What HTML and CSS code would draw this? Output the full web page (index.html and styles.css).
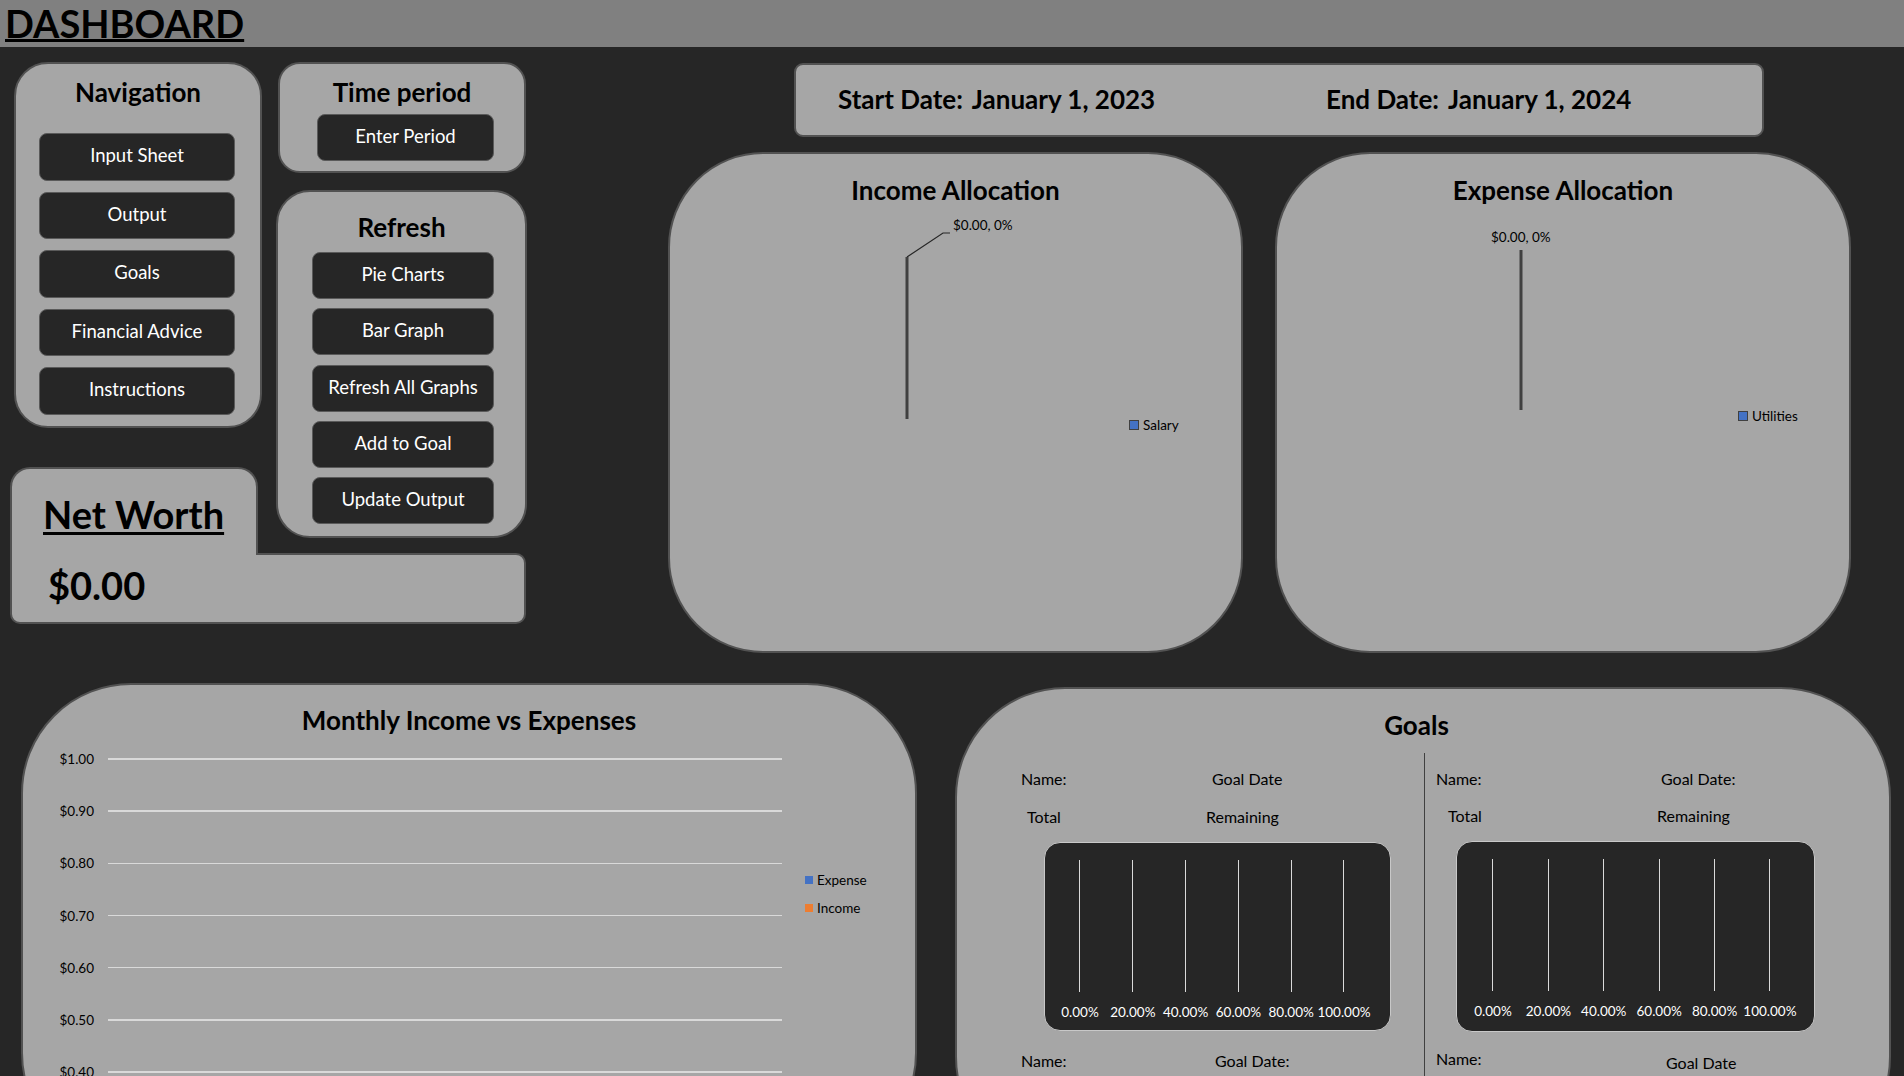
FILE: index.html
```html
<!DOCTYPE html>
<html lang="en">
<head>
<meta charset="utf-8">
<title>Dashboard</title>
<link rel="stylesheet" href="styles.css">
</head>
<body>
<header class="topbar"><h1 class="page-title">DASHBOARD</h1></header>
<main class="board">
  <section class="top-row">
    <div class="controls">
      <nav class="panel nav-panel">
        <h2 class="panel-title">Navigation</h2>
        <div class="btn-stack nav-stack">
          <div class="btn">Input Sheet</div>
          <div class="btn">Output</div>
          <div class="btn">Goals</div>
          <div class="btn">Financial Advice</div>
          <div class="btn">Instructions</div>
        </div>
      </nav>
      <section class="panel time-panel">
        <h2 class="panel-title">Time period</h2>
        <div class="btn btn-period">Enter Period</div>
      </section>
      <section class="panel refresh-panel">
        <h2 class="panel-title">Refresh</h2>
        <div class="btn-stack refresh-stack">
          <div class="btn btn-sm">Pie Charts</div>
          <div class="btn btn-sm">Bar Graph</div>
          <div class="btn btn-sm">Refresh All Graphs</div>
          <div class="btn btn-sm">Add to Goal</div>
          <div class="btn btn-sm">Update Output</div>
        </div>
      </section>
      <div class="net-tab"><h2 class="net-title">Net Worth</h2></div>
      <div class="panel net-box"><span class="net-value">$0.00</span></div>
    </div>

    <div class="charts-top">
      <div class="panel date-bar">
        <div class="date-start">Start Date:<span class="date-value">January 1, 2023</span></div>
        <div class="date-end">End Date:<span class="date-value">January 1, 2024</span></div>
      </div>
      <div class="pie-row">
        <section class="panel pie-panel">
          <h2 class="chart-title">Income Allocation</h2>
          <svg class="pie-svg" width="575" height="501" viewBox="0 0 575 501">
            <polyline points="282,81 275,81 239,105" fill="none" stroke="#262626" stroke-width="1.2"/>
            <line x1="239" y1="105" x2="239" y2="267" stroke="#404040" stroke-width="3"/>
          </svg>
          <span class="data-label income-label">$0.00, 0%</span>
          <div class="pie-legend income-legend"><span class="swatch swatch-pie"></span><span>Salary</span></div>
        </section>
        <section class="panel pie-panel pie-panel-wide">
          <h2 class="chart-title">Expense Allocation</h2>
          <svg class="pie-svg" width="576" height="501" viewBox="0 0 576 501">
            <line x1="246" y1="98" x2="246" y2="258" stroke="#404040" stroke-width="3"/>
          </svg>
          <span class="data-label expense-label">$0.00, 0%</span>
          <div class="pie-legend expense-legend"><span class="swatch swatch-pie"></span><span>Utilities</span></div>
        </section>
      </div>
    </div>
  </section>

  <section class="bottom-row">
    <section class="panel bar-panel">
      <h2 class="chart-title">Monthly Income vs Expenses</h2>
      <div class="plot">
        <div class="axis">
          <div class="grid-row"><span class="tick">$1.00</span><span class="gridline"></span></div>
          <div class="grid-row"><span class="tick">$0.90</span><span class="gridline"></span></div>
          <div class="grid-row"><span class="tick">$0.80</span><span class="gridline"></span></div>
          <div class="grid-row"><span class="tick">$0.70</span><span class="gridline"></span></div>
          <div class="grid-row"><span class="tick">$0.60</span><span class="gridline"></span></div>
          <div class="grid-row"><span class="tick">$0.50</span><span class="gridline"></span></div>
          <div class="grid-row"><span class="tick">$0.40</span><span class="gridline"></span></div>
        </div>
        <div class="legend">
          <div class="legend-item"><span class="swatch swatch-expense"></span><span>Expense</span></div>
          <div class="legend-item"><span class="swatch swatch-income"></span><span>Income</span></div>
        </div>
      </div>
    </section>

    <section class="panel goals-panel">
      <h2 class="chart-title goals-title">Goals</h2>
      <div class="goal-cols">
        <div class="goal-col goal-col-left">
          <div class="field-row l-a"><span>Name:</span><span>Goal Date</span></div>
          <div class="field-row l-b"><span>Total</span><span>Remaining</span></div>
          <div class="goal-box l-box">
            <div class="pct"><span>0.00%</span></div>
            <div class="pct"><span>20.00%</span></div>
            <div class="pct"><span>40.00%</span></div>
            <div class="pct"><span>60.00%</span></div>
            <div class="pct"><span>80.00%</span></div>
            <div class="pct"><span>100.00%</span></div>
          </div>
          <div class="field-row l-c"><span>Name:</span><span>Goal Date:</span></div>
        </div>
        <div class="goal-col goal-col-right">
          <div class="field-row r-a"><span>Name:</span><span>Goal Date:</span></div>
          <div class="field-row r-b"><span>Total</span><span>Remaining</span></div>
          <div class="goal-box r-box">
            <div class="pct"><span>0.00%</span></div>
            <div class="pct"><span>20.00%</span></div>
            <div class="pct"><span>40.00%</span></div>
            <div class="pct"><span>60.00%</span></div>
            <div class="pct"><span>80.00%</span></div>
            <div class="pct"><span>100.00%</span></div>
          </div>
          <div class="field-row r-c"><span>Name:</span><span class="lower">Goal Date</span></div>
        </div>
      </div>
    </section>
  </section>
</main>
</body>
</html>
```

FILE: styles.css
```css
* { box-sizing: border-box; }
html, body { margin: 0; padding: 0; }
body {
  width: 1904px;
  height: 1076px;
  overflow: hidden;
  background: #262626;
  font-family: Lato, "Liberation Sans", Arial, sans-serif;
  color: #000;
}

/* header */
.topbar {
  height: 47px;
  background: #808080;
  padding-left: 5px;
}
.page-title {
  margin: 0;
  font-size: 38px;
  line-height: 46px;
  font-weight: 700;
  text-decoration: underline;
  text-decoration-thickness: 3px;
  text-underline-offset: 1px;
}

.board { padding-top: 15px; }
.top-row { display: flex; align-items: flex-start; }

/* generic panel */
.panel {
  background: #a6a6a6;
  border: 2px solid #525252;
}
.panel-title {
  margin: 0;
  font-size: 26px;
  line-height: 32px;
  font-weight: 700;
  text-align: center;
}

/* left controls */
.controls {
  margin-left: 10px;
  display: grid;
  grid-template-columns: 252px 251px;
  column-gap: 14px;
  grid-template-rows: 111px 17px 238px 39px 71px 15px 71px;
}
.nav-panel {
  grid-column: 1;
  grid-row: 1 / 4;
  margin-left: 4px;
  border-radius: 34px;
  padding-top: 11.5px;
}
.time-panel {
  grid-column: 2;
  grid-row: 1;
  margin-left: 2px;
  margin-right: 1px;
  border-radius: 22px;
  padding-top: 11.5px;
}
.refresh-panel {
  grid-column: 2;
  grid-row: 3 / 6;
  border-radius: 34px;
  padding-top: 18.5px;
}

.btn-stack { display: flex; flex-direction: column; }
.nav-stack { margin: 25.5px 0 0 23px; width: 196px; gap: 11px; }
.refresh-stack { margin: 9.5px 0 0 34px; width: 182px; gap: 9.3px; }

.btn {
  height: 47.5px;
  background: #262626;
  color: #fff;
  border: 1.5px solid #5a5a5a;
  border-radius: 8px;
  font-size: 18.5px;
  line-height: 22px;
  display: flex;
  align-items: center;
  justify-content: center;
  padding-bottom: 3px;
  white-space: nowrap;
}
.btn-sm { height: 47px; }
.btn-period { margin: 6.5px 0 0 37px; width: 177px; height: 47px; }

/* net worth */
.net-tab {
  grid-column: 1;
  grid-row: 5 / 7;
  width: 248px;
  margin-bottom: -2px;
  position: relative;
  z-index: 1;
  background: #a6a6a6;
  border: 2px solid #525252;
  border-bottom: none;
  border-radius: 20px 20px 0 0;
  padding: 23px 0 0 31px;
}
.net-title {
  margin: 0;
  font-size: 38px;
  line-height: 44px;
  font-weight: 700;
  text-decoration: underline;
  text-decoration-thickness: 2.5px;
  text-underline-offset: 3px;
}
.net-box {
  grid-column: 1 / 3;
  grid-row: 7;
  width: 516px;
  border-radius: 0 10px 10px 10px;
  padding: 8px 0 0 36px;
}
.net-value {
  font-size: 38px;
  line-height: 44px;
  font-weight: 700;
}

/* top charts */
.charts-top { margin-left: 141px; width: 1183px; }
.date-bar {
  margin: 1px 0 0 126px;
  width: 970px;
  height: 74px;
  border-radius: 9px;
  padding: 17.5px 0 0 42px;
  display: flex;
  font-size: 26px;
  line-height: 32px;
  font-weight: 700;
}
.date-start { width: 488px; }
.date-value { margin-left: 9px; }

.pie-row { display: flex; gap: 32px; margin-top: 15px; }
.pie-panel {
  position: relative;
  width: 575px;
  height: 501px;
  border-radius: 95px;
  padding-top: 22px;
}
.pie-panel-wide { width: 576px; }
.chart-title {
  margin: 0;
  font-size: 26px;
  line-height: 28px;
  font-weight: 700;
  text-align: center;
}
.pie-svg { position: absolute; left: -2px; top: -2px; }
.data-label {
  position: absolute;
  font-size: 13.5px;
  line-height: 16px;
  white-space: nowrap;
}
.income-label { left: 283px; top: 63.4px; }
.expense-label { left: 214px; top: 75.4px; }
.pie-legend {
  position: absolute;
  display: flex;
  align-items: center;
  gap: 4px;
  font-size: 13.5px;
  line-height: 16px;
}
.income-legend { left: 459px; top: 263px; }
.expense-legend { left: 461px; top: 254px; }

.swatch { display: inline-block; width: 8px; height: 8px; }
.swatch-pie { width: 10px; height: 10px; background: #4472c4; border: 1.5px solid #404040; }
.swatch-expense { background: #4472c4; }
.swatch-income { background: #ed7d31; }

/* bottom row */
.bottom-row { display: flex; align-items: flex-start; margin-top: 30px; }
.bar-panel {
  margin-left: 21px;
  width: 896px;
  height: 480px;
  border-radius: 110px;
  padding-top: 21px;
}
.plot { display: flex; margin-top: -1px; }
.axis { width: 759px; }
.grid-row { display: flex; align-items: center; height: 52.17px; }
.tick {
  width: 71px;
  text-align: right;
  font-size: 13.5px;
  line-height: 16px;
}
.gridline { margin-left: 14px; width: 674px; height: 1.5px; background: #d9d9d9; }
.legend {
  margin: 139px 0 0 23px;
  display: flex;
  flex-direction: column;
  gap: 12px;
  font-size: 13.5px;
  line-height: 16px;
}
.legend-item { display: flex; align-items: center; gap: 4px; }

/* goals */
.goals-panel {
  margin-left: 38px;
  margin-top: 4px;
  width: 936px;
  height: 480px;
  border-radius: 110px;
  padding-top: 22px;
}
.goals-title { padding-right: 13px; }
.goal-cols { display: flex; margin-top: 14px; }
.goal-col { padding-top: 16px; height: 420px; }
.goal-col-left { width: 467px; }
.goal-col-right { flex: 1; border-left: 1px solid #404040; }

.field-row {
  display: grid;
  font-size: 16px;
  line-height: 20px;
  white-space: nowrap;
}
.l-a { padding-left: 64px; grid-template-columns: 191px auto; }
.l-b { margin-top: 18px; padding-left: 70px; grid-template-columns: 179px auto; }
.l-c { margin-top: 20px; padding-left: 64px; grid-template-columns: 194px auto; }
.r-a { padding-left: 11px; grid-template-columns: 225px auto; }
.r-b { margin-top: 17px; padding-left: 23px; grid-template-columns: 209px auto; }
.r-c { margin-top: 17px; padding-left: 11px; grid-template-columns: 230px auto; }
.lower { padding-top: 4px; }

.goal-box {
  background: #262626;
  border: 1px solid #c8c8c8;
  border-radius: 16px;
  display: grid;
}
.l-box {
  margin: 15px 0 0 87px;
  width: 347px;
  height: 189px;
  grid-template-columns: repeat(6, 52.8px);
  padding-left: 8.6px;
}
.r-box {
  margin: 15px 0 0 31px;
  width: 359px;
  height: 191px;
  grid-template-columns: repeat(6, 55.4px);
  padding-left: 8.3px;
}
.pct {
  display: flex;
  flex-direction: column;
  align-items: center;
  padding-top: 17px;
}
.pct::before {
  content: "";
  width: 1px;
  height: 132px;
  background: #d9d9d9;
}
.pct span {
  margin-top: 12px;
  font-size: 13.5px;
  line-height: 16px;
  color: #fff;
  white-space: nowrap;
}
```
